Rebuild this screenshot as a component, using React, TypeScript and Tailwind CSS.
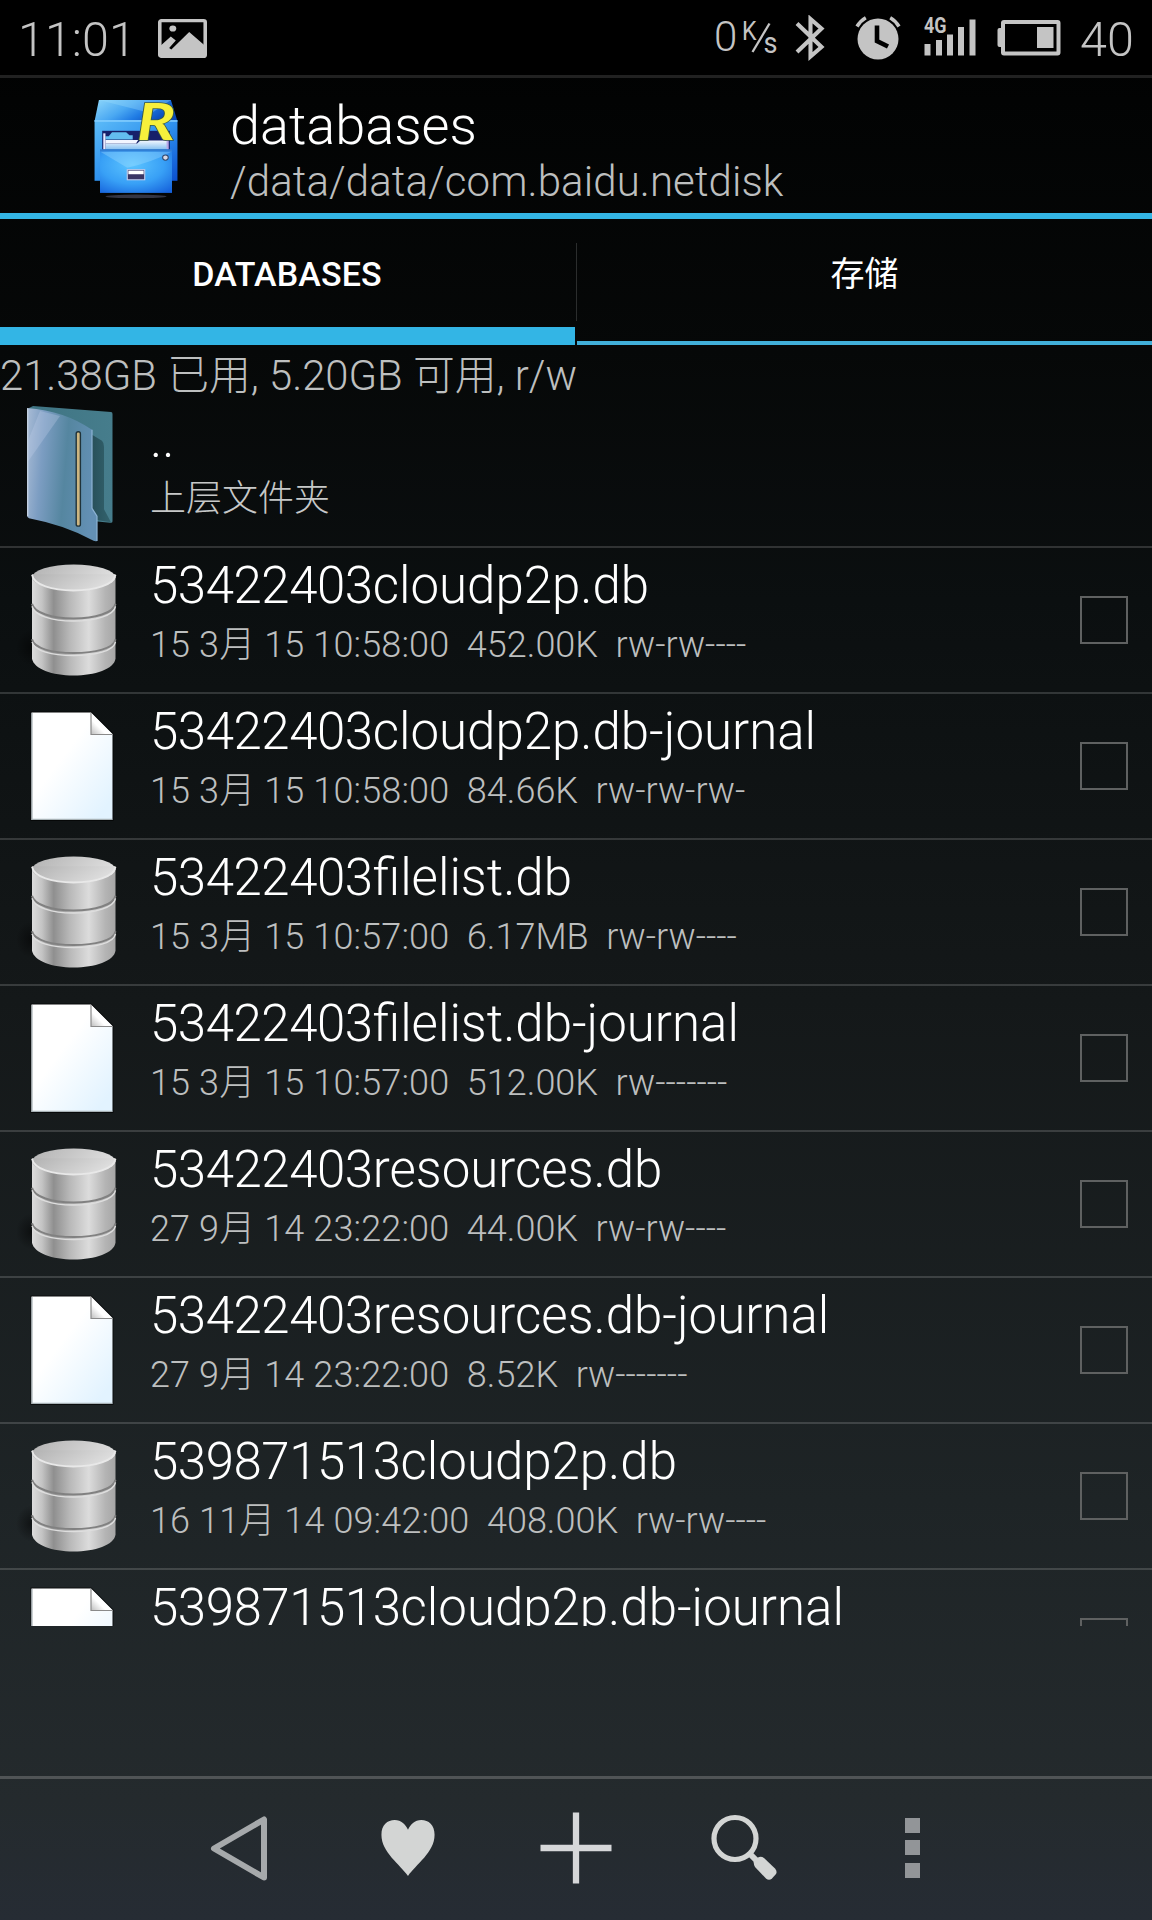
import React from 'react';

type Entry = { id: string; name: string; date: string; size: string; mode: string; kind: 'db' | 'file' };

const entries: Entry[] = [
  { id: '53422403', name: 'cloudp2p.db', date: '15 3月 15 10:58:00', size: '452.00K', mode: 'rw-rw----', kind: 'db' },
  { id: '53422403', name: 'cloudp2p.db-journal', date: '15 3月 15 10:58:00', size: '84.66K', mode: 'rw-rw-rw-', kind: 'file' },
  { id: '53422403', name: 'filelist.db', date: '15 3月 15 10:57:00', size: '6.17MB', mode: 'rw-rw----', kind: 'db' },
  { id: '53422403', name: 'filelist.db-journal', date: '15 3月 15 10:57:00', size: '512.00K', mode: 'rw-------', kind: 'file' },
  { id: '53422403', name: 'resources.db', date: '27 9月 14 23:22:00', size: '44.00K', mode: 'rw-rw----', kind: 'db' },
  { id: '53422403', name: 'resources.db-journal', date: '27 9月 14 23:22:00', size: '8.52K', mode: 'rw-------', kind: 'file' },
  { id: '539871513', name: 'cloudp2p.db', date: '16 11月 14 09:42:00', size: '408.00K', mode: 'rw-rw----', kind: 'db' },
];

function PictureIcon() {
  return (
    <svg width="49" height="39" viewBox="0 0 44 39" preserveAspectRatio="none" className="block">
      <rect x="1.6" y="1.6" width="40.8" height="35.8" rx="1.5" fill="none" stroke="#c4c4c4" strokeWidth="3.2" />
      <circle cx="13.3" cy="9.5" r="3.1" fill="#c4c4c4" />
      <path d="M2 27 L11.5 17.5 L16 21.5 L10 29 L12 30.5 L28 13 L42 26.5 V37 H2 Z" fill="#c4c4c4" />
    </svg>
  );
}

function BluetoothIcon() {
  return (
    <svg width="32" height="46" viewBox="0 0 32 46" className="block">
      <path d="M3 8.5 L27.5 32 L16.500 41.500 V4 L27.500 13.500 L3 37" fill="none" stroke="#c4c4c4" strokeWidth="4.100" />
    </svg>
  );
}

function AlarmIcon() {
  return (
    <svg width="46" height="44" viewBox="0 0 46 44" className="block">
      <circle cx="23" cy="23" r="20.500" fill="#c4c4c4" />
      <path d="M22 9.500 V25 L33 30.500" fill="none" stroke="#000" strokeWidth="4.600" />
      <path d="M2 10.500 Q5.500 4.800 10.800 1.800 M44 10.500 Q40.500 4.800 35.200 1.800" fill="none" stroke="#c4c4c4" strokeWidth="3.600" />
    </svg>
  );
}

function SignalIcon() {
  return (
    <svg width="54" height="42" viewBox="0 0 54 42" className="block overflow-visible">
      <text x="0" y="17.500" fontFamily="Roboto" fontWeight="700" fontSize="22" textLength="22.500" lengthAdjust="spacingAndGlyphs" fill="#c4c4c4">4G</text>
      <g fill="#c4c4c4">
        <rect x="0.500" y="29" width="6" height="11.500" />
        <rect x="12" y="25" width="6" height="15.500" />
        <rect x="23" y="19.500" width="6" height="21" />
        <rect x="34" y="12" width="6" height="28.500" />
        <rect x="45.500" y="4.500" width="6" height="36" />
      </g>
    </svg>
  );
}

function BatteryIcon() {
  return (
    <svg width="64" height="36" viewBox="0 0 64 36" className="block">
      <path d="M5 8 H2.500 Q0.500 8 0.500 10 V25 Q0.500 27 2.500 27 H5 Z" fill="#c4c4c4" />
      <rect x="6" y="2" width="55.500" height="31.500" rx="1" fill="none" stroke="#c4c4c4" strokeWidth="4" />
      <rect x="40" y="7" width="16.500" height="21" fill="#c4c4c4" />
    </svg>
  );
}

function SpeedUnit() {
  return (
    <svg width="36" height="44" viewBox="0 0 36 44" className="block overflow-visible" fontFamily="Roboto" fontWeight="400" fill="#c4c4c4">
      <text x="-1" y="20" fontSize="25" textLength="14.500" lengthAdjust="spacingAndGlyphs">K</text>
      <path d="M9.500 32 L26.500 3.500" stroke="#c4c4c4" strokeWidth="2.300" />
      <text x="20.500" y="32.500" fontSize="29" textLength="14" lengthAdjust="spacingAndGlyphs">s</text>
    </svg>
  );
}

function AppIcon() {
  return (
    <svg width="96" height="105" viewBox="0 0 88 104" preserveAspectRatio="none" className="block overflow-visible">
      <defs>
        <linearGradient id="top" x1="0" y1="0" x2="1" y2="0.400">
          <stop offset="0" stopColor="#8fd8fb" />
          <stop offset="0.450" stopColor="#4aa8f2" />
          <stop offset="0.700" stopColor="#1f7be4" />
          <stop offset="1" stopColor="#0b49b8" />
        </linearGradient>
        <linearGradient id="body" x1="0" y1="0" x2="1" y2="1">
          <stop offset="0" stopColor="#5dbcf8" />
          <stop offset="0.500" stopColor="#2f92ee" />
          <stop offset="1" stopColor="#0a4fd0" />
        </linearGradient>
        <radialGradient id="drawer" cx="0.450" cy="0.350" r="0.800">
          <stop offset="0" stopColor="#5cc4ff" />
          <stop offset="0.550" stopColor="#38a0f6" />
          <stop offset="1" stopColor="#1663dc" />
        </radialGradient>
        <linearGradient id="paper" x1="0" y1="0" x2="0" y2="1">
          <stop offset="0" stopColor="#f4f8ff" />
          <stop offset="1" stopColor="#86c0f0" />
        </linearGradient>
      </defs>
      <ellipse cx="44" cy="97.500" rx="28" ry="1.800" fill="#4a4a5c" opacity="0.700" />
      <path d="M10 2 H76 L82 23 H6 Z" fill="url(#top)" />
      <path d="M10 2 L58 15 L76 2 Z" fill="#9adcfc" opacity="0.350" />
      <rect x="6" y="22" width="76" height="60" fill="url(#body)" />
      <rect x="6" y="22" width="76" height="1.500" fill="#86d0ff" />
      <rect x="13" y="32.500" width="62" height="19" fill="#17206a" />
      <path d="M16 44 V51 H73 V42 H48 L45 45 H16 Z" fill="url(#paper)" />
      <path d="M16 38 H19 L22 34 H35 L38 37 H41 V41 H16 Z" fill="#63bdf0" />
      <path d="M16 43 V41.500 H46 L44 45 H16 Z" fill="#f2f5ff" />
      <rect x="14" y="35" width="2" height="16" fill="#e8e8ff" />
      <rect x="72" y="35" width="2" height="16" fill="#b9a9e8" />
      <rect x="11" y="51" width="66" height="43" fill="url(#drawer)" />
      <path d="M11 53 L36 69 Q58 64 77 53 Z" fill="#b4e6ff" opacity="0.300" />
      <rect x="11" y="51" width="66" height="2" fill="#2f7fd6" />
      <circle cx="71" cy="59" r="2.600" fill="#d8d8e4" stroke="#31486e" />
      <rect x="36" y="71" width="16" height="10" fill="#3a3564" stroke="#c4cdec" strokeWidth="1" />
      <rect x="37" y="72" width="14" height="3.500" fill="#fff" />
      <text x="45" y="42" fontFamily="Lato" fontStyle="italic" fontWeight="700" fontSize="52" textLength="35" lengthAdjust="spacingAndGlyphs" fill="#f7f03c" stroke="#3d5a40" strokeWidth="1.500" paintOrder="stroke">R</text>
    </svg>
  );
}

function FolderIcon() {
  return (
    <svg width="90" height="139" viewBox="0 0 90 140" preserveAspectRatio="none" className="block">
      <defs>
        <linearGradient id="fback" x1="0" y1="0" x2="1" y2="0">
          <stop offset="0" stopColor="#3f7483" />
          <stop offset="1" stopColor="#467d8c" />
        </linearGradient>
        <linearGradient id="ffront" x1="0" y1="0" x2="1" y2="0.150">
          <stop offset="0" stopColor="#a9bcd6" />
          <stop offset="0.260" stopColor="#7c9dc2" />
          <stop offset="0.600" stopColor="#5586a0" />
          <stop offset="1" stopColor="#6390b4" />
        </linearGradient>
        <linearGradient id="fshade" x1="0" y1="0" x2="1" y2="0">
          <stop offset="0" stopColor="#28505a" />
          <stop offset="1" stopColor="#33636e" />
        </linearGradient>
      </defs>
      <path d="M4 3 L8 1 L86 7 Q87.500 7 87.500 9 V117 Q87.500 119 85 118.500 L20 112 Z" fill="url(#fback)" />
      <path d="M67 30 L77 36 Q79 38 79 42 V105 L86 118 L67 115 Z" fill="url(#fshade)" />
      <path d="M2 3 Q40 6 67 25 V104 L72 112 V137 Q70 138 66 135.500 Q40 121 4 114 Q2 113 2 111 Z" fill="url(#ffront)" />
      <path d="M15 6 L35 11 L3 57 V36 Z" fill="#c3d2ea" opacity="0.300" />
      <path d="M67 25 V104 L72 112 V137" fill="none" stroke="#8db3d4" strokeWidth="1.200" />
      <path d="M2.700 3.500 V112" stroke="#c6d2e2" strokeWidth="1.300" />
      <rect x="51.200" y="27" width="4.200" height="95" rx="2" fill="#cdb681" stroke="#20333a" strokeWidth="1.400" />
    </svg>
  );
}

function DatabaseIcon() {
  return (
    <svg width="102" height="120" viewBox="0 0 102 118" preserveAspectRatio="none" className="block">
      <defs>
        <linearGradient id="metal" x1="0" y1="0" x2="1" y2="0">
          <stop offset="0" stopColor="#dcdcdc" />
          <stop offset="0.120" stopColor="#c4c4c4" />
          <stop offset="0.260" stopColor="#8f8f8f" />
          <stop offset="0.450" stopColor="#b8b8b8" />
          <stop offset="0.680" stopColor="#dcdcdc" />
          <stop offset="0.880" stopColor="#b4b4b4" />
          <stop offset="1" stopColor="#a6a6a6" />
        </linearGradient>
        <linearGradient id="lid" x1="0" y1="0" x2="1" y2="0.300">
          <stop offset="0" stopColor="#b2b2b2" />
          <stop offset="1" stopColor="#dedede" />
        </linearGradient>
        <radialGradient id="cast">
          <stop offset="0" stopColor="#000" stopOpacity="0.500" />
          <stop offset="1" stopColor="#000" stopOpacity="0" />
        </radialGradient>
      </defs>
      <ellipse cx="16" cy="86" rx="16" ry="18" fill="url(#cast)" />
      <path d="M16 16 V97 C18 107 36 113.500 57.500 113.500 C79 113.500 98 107 99.500 97 V16 Z" fill="url(#metal)" />
      <ellipse cx="57.700" cy="17" rx="41.700" ry="12.500" fill="url(#lid)" />
      <path d="M16 14 C18 24 36 29.500 57.500 29.500 C79 29.500 98 24 99.500 14 Z" fill="url(#lid)" />
      <path d="M16 14.500 C18 24.500 36 30 57.500 30 C79 30 98 24.500 99.500 14.500" fill="none" stroke="#e8e8e8" strokeWidth="1.800" />
      <path d="M16 43 C18 52 36 57.500 57.500 57.500 C79 57.500 98 52 99.500 43 M16 78 C18 87 36 91.500 57.500 91.500 C79 91.500 98 87 99.500 78" fill="none" stroke="#818181" strokeWidth="2" />
      <path d="M16 45.500 C18 54.500 36 60 57.500 60 C79 60 98 54.500 99.500 45.500 M16 80.500 C18 89.500 36 94 57.500 94 C79 94 98 89.500 99.500 80.500" fill="none" stroke="#dedede" strokeWidth="1.400" />
    </svg>
  );
}

function FileIcon() {
  return (
    <svg width="88" height="114" viewBox="0 0 88 114" className="block">
      <defs>
        <linearGradient id="sheet" x1="0" y1="0" x2="1" y2="1">
          <stop offset="0.400" stopColor="#ffffff" />
          <stop offset="0.900" stopColor="#e2f3ff" />
        </linearGradient>
        <linearGradient id="fold" x1="0" y1="1" x2="0.600" y2="0.400">
          <stop offset="0" stopColor="#bdbdbd" />
          <stop offset="0.600" stopColor="#ffffff" />
        </linearGradient>
      </defs>
      <path d="M2.500 2.500 H62 L83.500 24 V110 H2.500 Z" fill="url(#sheet)" stroke="#000" strokeWidth="2" strokeOpacity="0.600" paintOrder="stroke" />
      <path d="M3 3 V109.300 H83" fill="none" stroke="#a8b2b6" strokeWidth="1.200" />
      <path d="M62 3 V24.500 H83.500 Z" fill="url(#fold)" />
      <path d="M62 3 V24.500 H83.500" fill="none" stroke="#8a8a8a" strokeWidth="1.200" />
    </svg>
  );
}

function EntryIcon({ kind }: { kind: Entry['kind'] }) {
  return (
    <div className="w-[150px] shrink-0">
      {kind === 'db' ? (
        <div className="pt-[12px] pl-[16px]"><DatabaseIcon /></div>
      ) : (
        <div className="pt-[16px] pl-[29px]"><FileIcon /></div>
      )}
    </div>
  );
}

function EntryName({ id, name }: { id: string; name: string }) {
  return (
    <div className="mt-[8px] h-[60px] text-[51px] leading-[60px] text-white">
      <span className="tracking-[-0.450px]">{id}</span>
      {name}
    </div>
  );
}

function FileRow({ entry }: { entry: Entry }) {
  return (
    <div className="flex h-[146px] shrink-0 border-b-2 border-white/[0.155]">
      <EntryIcon kind={entry.kind} />
      <div className="min-w-0 flex-1 whitespace-pre">
        <EntryName id={entry.id} name={entry.name} />
        <div className="mt-[5px] h-[48px] text-[36px] leading-[48px] text-[#bdbfbf]">
          <span className="tracking-[0.130px]">{entry.date}</span>
          {'  ' + entry.size + '  ' + entry.mode}
        </div>
      </div>
      <div className="mt-[48px] mr-[24px] h-[48px] w-[48px] border-2 border-[#5f6161]" />
    </div>
  );
}

export default function App() {
  return (
    <div className="flex h-[1920px] w-[1152px] flex-col overflow-hidden bg-[linear-gradient(180deg,#000000_0px,#020303_100px,#060808_350px,#0b0f10_600px,#141819_1000px,#1e2426_1500px,#242a2d_1800px,#262c34_1920px)] font-['Roboto','Noto_Sans_CJK_SC',sans-serif] font-light">
      <header className="flex h-[78px] shrink-0 items-start border-b-[3px] border-[#212121] bg-black text-[#c4c4c4]">
        <div className="ml-[18px] w-[140px] pt-[10px] text-[48.500px] leading-[60px]">11:01</div>
        <div className="pt-[19px]"><PictureIcon /></div>
        <div className="ml-[507px] w-[29px] pt-[9px] text-[42px] leading-[56px]">0</div>
        <div className="pt-[20px]"><SpeedUnit /></div>
        <div className="ml-[15px] pt-[15px]"><BluetoothIcon /></div>
        <div className="ml-[29px] pt-[16px]"><AlarmIcon /></div>
        <div className="ml-[23px] pt-[15px]"><SignalIcon /></div>
        <div className="ml-[19px] pt-[20px]"><BatteryIcon /></div>
        <div className="ml-[19px] pt-[10px] text-[48.500px] leading-[60px]">40</div>
      </header>

      <div className="flex h-[141px] shrink-0 border-b-[6px] border-[#33b5e5]">
        <div className="w-[230px] shrink-0 pt-[20px] pl-[88px]"><AppIcon /></div>
        <div>
          <div className="mt-[17px] h-[62px] text-[54px] leading-[62px] text-white">databases</div>
          <div className="mt-[1px] h-[48px] text-[42px] leading-[48px] tracking-[0.090px] text-[#bdbfbf]">/data/data/com.baidu.netdisk</div>
        </div>
      </div>

      <nav className="flex h-[126px] shrink-0 text-center text-[34px] text-white">
        <div className="w-[575px] border-b-[18px] border-[#33b5e5] pr-px leading-[110px] font-medium tracking-[0.100px]">DATABASES</div>
        <div className="mr-px ml-px mt-[24px] h-[78px] w-px bg-[#2b2d2d]" />
        <div className="-ml-px flex-1 border-b-[4px] border-[#41afd9] leading-[110px] font-normal">存储</div>
      </nav>

      <div className="h-[57px] shrink-0 pt-[6px] text-[41.800px] leading-[50px] whitespace-pre text-[#bdbfbf]">21.38GB 已用, 5.20GB 可用, r/w</div>

      <main className="flex h-[1224px] shrink-0 flex-col overflow-hidden">
        <div className="flex h-[146px] shrink-0 border-b-2 border-white/[0.155]">
          <div className="w-[150px] shrink-0 pt-[3px] pl-[25px]"><FolderIcon /></div>
          <div>
            <div className="mt-[8px] h-[60px] text-[51px] leading-[60px] text-white">..</div>
            <div className="mt-[5px] h-[48px] text-[36px] leading-[48px] text-[#c6c8c8]">上层文件夹</div>
          </div>
        </div>
        {entries.map((e) => <FileRow key={e.id + e.name} entry={e} />)}
        <div className="flex h-[56px] shrink-0 overflow-hidden">
          <EntryIcon kind="file" />
          <div className="min-w-0 flex-1 whitespace-pre">
            <EntryName id="539871513" name="cloudp2p.db-journal" />
          </div>
          <div className="mt-[48px] mr-[24px] h-[48px] w-[48px] shrink-0 border-2 border-[#5f6161]" />
        </div>
      </main>

      <footer className="mt-[150px] flex h-[144px] shrink-0 border-t-[3px] border-[#505456] px-[156px]">
        <div className="flex w-[168px] justify-center pt-[35px]">
          <svg width="60" height="70" viewBox="0 0 60 70"><path d="M54 5.500 V63.500 L4 34.500 Z" fill="none" stroke="#a6a9ab" strokeWidth="6" strokeLinejoin="round" /></svg>
        </div>
        <div className="flex w-[168px] justify-center pt-[38px]">
          <svg width="56" height="61" viewBox="0 0 56 62"><path d="M28 60 C20 48 1 36 1 18 C1 8 7 3 14.500 3 C21 3 26 8 28 13 C30 8 35 3 41.500 3 C49 3 55 8 55 18 C55 36 36 48 28 60 Z" fill="#d3d5d4" /></svg>
        </div>
        <div className="flex w-[168px] justify-center pt-[33px]">
          <svg width="72" height="72" viewBox="0 0 72 72"><path d="M36 0.500 V71.500 M0.500 36 H71.500" stroke="#d6d7d9" strokeWidth="6.300" /></svg>
        </div>
        <div className="flex w-[168px] justify-center pt-[34px]">
          <svg width="68" height="70" viewBox="0 0 68 70">
            <circle cx="25" cy="25.500" r="21" fill="none" stroke="#d3d5d4" strokeWidth="5.200" />
            <path d="M39 40 L48 49" stroke="#d3d5d4" strokeWidth="6" />
            <path d="M44 48 Q43 50 45 54 L56 65.500 Q59 68 62 65.500 L66 61 Q67.500 58.500 65 55.500 L54 45 Q51 43 48 44.500 Z" fill="#d3d5d4" />
          </svg>
        </div>
        <div className="flex w-[168px] flex-col items-center pt-[39px]">
          <div className="h-[15px] w-[15px] bg-[#929598]" />
          <div className="mt-[7px] h-[15px] w-[15px] bg-[#929598]" />
          <div className="mt-[8px] h-[15px] w-[15px] bg-[#929598]" />
        </div>
      </footer>
    </div>
  );
}
